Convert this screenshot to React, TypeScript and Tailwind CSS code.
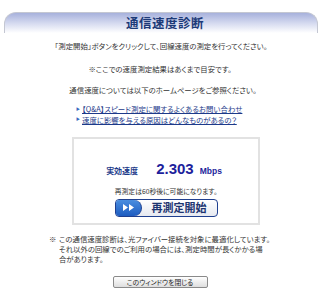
import React from "react";

const jp = "font-['Noto_Sans_CJK_JP',sans-serif]";

const links = [
  "【Q&A】スピード測定に関するよくあるお問い合わせ",
  "速度に影響を与える原因はどんなものがあるの？",
];

const App = () => {
  return (
    <div className={`w-[320px] h-[295px] bg-white overflow-hidden text-[#333] ${jp}`}>
      <div className="pt-[12px] pl-[4px] pr-[2px]">
        <div className="h-[21px] rounded-t-[12px] border-t border-l border-r border-[#c4c7d2] bg-linear-to-b from-[#a7b1dc] via-[#d4d9ef] to-white flex items-center justify-center">
          <h1 className="text-[12.5px] font-bold text-[#1c3a78] tracking-[0.5px] pl-[8px]">
            通信速度診断
          </h1>
        </div>
      </div>

      <div className="flex flex-col items-center text-[7.4px] leading-none [font-feature-settings:'palt']">
        <p className="mt-[9px] pl-[2px]">「測定開始」ボタンをクリックして、回線速度の測定を行ってください。</p>
        <p className="mt-[16px]">※ここでの速度測定結果はあくまで目安です。</p>
        <p className="mt-[13px] pl-[6px]">通信速度については以下のホームページをご参照ください。</p>
      </div>

      <div className="mt-[12px] pl-[76px] flex flex-col gap-[3px] text-[7.4px] leading-none [font-feature-settings:'palt']">
        {links.map((l) => (
          <a key={l} href="#" className="flex items-center gap-[2px]">
            <span className="text-[#3b6cc0] text-[4px]">▶</span>
            <span className="text-[#1d3a8a] underline underline-offset-[1px]">{l}</span>
          </a>
        ))}
      </div>

      <div className="mt-[14px] ml-[72px] w-[188px] h-[88px] border-2 border-[#e2e2e2] flex flex-col items-center">
        <div className="mt-[22px] flex items-baseline pr-[4px]">
          <span className="text-[8px] font-bold text-[#1c3a8a] mr-[18px]">実効速度</span>
          <span className="font-['Liberation_Sans',Arial,sans-serif] text-[15px] font-bold text-[#1e1f9c] leading-none">
            2.303
          </span>
          <span className="font-['Liberation_Sans',Arial,sans-serif] text-[8.5px] font-bold text-[#1e1f9c] ml-[6px]">
            Mbps
          </span>
        </div>
        <p className="mt-[10px] text-[6.8px] leading-none text-[#333] [font-feature-settings:'palt']">
          再測定は60秒後に可能になります。
        </p>
        <button className="mt-[4px] w-[103px] h-[18px] rounded-[4px] border border-[#1f3f8f] bg-linear-to-b from-white to-[#e6e9f0] flex overflow-hidden">
          <span className="w-[26px] h-full rounded-r-[9px] bg-linear-to-b from-[#4a8ee0] to-[#1e5cc0] flex items-center justify-center border-r border-[#1f3f8f]">
            <svg width="13" height="9" viewBox="0 0 13 9">
              <path d="M1 1 L6 4.5 L1 8 Z M7 1 L12 4.5 L7 8 Z" fill="#fff" />
            </svg>
          </span>
          <span className="flex-1 flex items-center justify-center text-[11px] font-bold text-[#1c3470] leading-none">
            再測定開始
          </span>
        </button>
      </div>

      <div className="mt-[9px] ml-[49px] text-[7.4px] leading-[10px] text-[#333] flex [font-feature-settings:'palt']">
        <span className="w-[10px] shrink-0">※</span>
        <p className="whitespace-nowrap">
          この通信速度診断は、光ファイバー接続を対象に最適化しています。
          <br />
          それ以外の回線でのご利用の場合には、測定時間が長くかかる場
          <br />
          合があります。
        </p>
      </div>

      <div className="mt-[12px] flex justify-center">
        <button className="w-[95px] h-[12px] border border-[#8a8a8a] rounded-[2px] bg-linear-to-b from-white to-[#dedede] text-[6.8px] leading-none text-[#222] flex items-center justify-center [font-feature-settings:'palt']">
          このウィンドウを閉じる
        </button>
      </div>
    </div>
  );
};

export default App;
